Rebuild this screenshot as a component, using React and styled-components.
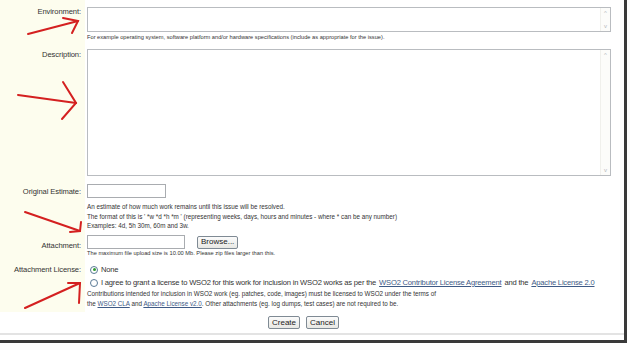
import React from 'react';
import styled, { createGlobalStyle } from 'styled-components';

const Global = createGlobalStyle`
  html, body {
    margin: 0;
    padding: 0;
    background: #ffffff;
  }
  body {
    font-family: "Liberation Sans", Arial, sans-serif;
    color: #222;
  }
`

const Frame = styled.div`
  position: relative;
  width: 624px;
  height: 340px;
  border-right: 3px solid #3a3a3a;
  border-bottom: 3px solid #3a3a3a;
  box-sizing: content-box;
  background: #fff;
  overflow: hidden;
`

const Form = styled.div`
  display: grid;
  grid-template-columns: 85px 1fr;
`

const Label = styled.div`
  background: #fdfdee;
  text-align: right;
  padding: ${p => p.$top || 8}px 4px 0 0;
  font-size: 7.6px;
  letter-spacing: -0.1px;
  color: #333;
  height: ${p => p.$h}px;
  box-sizing: border-box;
`

const Field = styled.div`
  padding: ${p => p.$top || 0}px 0 0 2px;
  height: ${p => p.$h}px;
  box-sizing: border-box;
`

const TextArea = styled.div`
  display: flex;
  width: 524px;
  height: ${p => p.$h}px;
  border: 1px solid #b9bcc0;
  box-sizing: border-box;
  background: #fff;
`

const AreaBody = styled.div`
  flex: 1;
`

const Scroll = styled.div`
  width: 9px;
  display: flex;
  flex-direction: column;
  justify-content: space-between;
  align-items: center;
  padding: 1px 0;
  background: #fcfcfa;
  border-left: 1px solid #f0f0ec;
  font-size: 6px;
  line-height: 8px;
  color: #b4b8bc;
`

const Help = styled.div`
  font-size: ${p => (p.$small ? 5.7 : 6.3)}px;
  line-height: ${p => p.$lh || 10}px;
  color: #333;
  margin-top: ${p => p.$mt || 0}px;
  white-space: nowrap;
`

const Input = styled.div`
  display: inline-block;
  width: ${p => p.$w}px;
  height: 14px;
  border: 1px solid #a9acb0;
  box-sizing: border-box;
  background: #fff;
  vertical-align: top;
`

const InputRow = styled.div`
  display: flex;
  align-items: center;
  gap: 12px;
`

const Button = styled.button`
  font-family: "Liberation Sans", Arial, sans-serif;
  font-size: 8px;
  color: #222;
  height: 13px;
  padding: 0 3px;
  border: 1px solid #7f8a94;
  border-radius: 2px;
  background: linear-gradient(#fbfbfb, #e8e8e4);
  line-height: 10px;
`

const RadioRow = styled.div`
  display: flex;
  align-items: center;
  gap: 3px;
  font-size: 7.6px;
  letter-spacing: -0.2px;
  color: #333;
  height: ${p => p.$h || 14}px;
  padding-left: 3px;
  white-space: nowrap;
`

const Radio = styled.span`
  width: 8px;
  height: 8px;
  border-radius: 50%;
  border: 1px solid #5a7a96;
  background: #fff;
  box-sizing: border-box;
  display: inline-flex;
  align-items: center;
  justify-content: center;
  &::after {
    content: '';
    width: 3px;
    height: 3px;
    border-radius: 50%;
    background: ${p => (p.$on ? '#2f9a2f' : 'transparent')};
  }
`

const Link = styled.a`
  color: #3e5a86;
  text-decoration: underline;
`

const ButtonBar = styled.div`
  grid-column: 1 / 3;
  display: flex;
  gap: 6px;
  padding: 4px 0 0 268px;
  height: 21px;
  box-sizing: border-box;
`

const Separator = styled.div`
  height: 2px;
  background: #e3e3e3;
`

const Arrows = styled.svg`
  position: absolute;
  left: 0;
  top: 0;
  pointer-events: none;
`

const ScrollBox = () => (
  <Scroll>
    <span>&#94;</span>
    <span>v</span>
  </Scroll>
)

export default function App() {
  return (
    <>
      <Global />
      <Frame>
        <Form>
          <Label $h={45} $top={7}>Environment:</Label>
          <Field $h={45} $top={7}>
            <TextArea $h={25}>
              <AreaBody />
              <ScrollBox />
            </TextArea>
            <Help $small $lh={9} $mt={1}>
              For example operating system, software platform and/or hardware specifications (include as appropriate for the issue).
            </Help>
          </Field>

          <Label $h={137} $top={5}>Description:</Label>
          <Field $h={137} $top={4}>
            <TextArea $h={127}>
              <AreaBody />
              <ScrollBox />
            </TextArea>
          </Field>

          <Label $h={50} $top={5}>Original Estimate:</Label>
          <Field $h={50} $top={2}>
            <Input $w={79} />
            <Help $lh={9.5} $mt={0}>
              An estimate of how much work remains until this issue will be resolved.<br />
              The format of this is ' *w *d *h *m ' (representing weeks, days, hours and minutes - where * can be any number)<br />
              Examples: 4d, 5h 30m, 60m and 3w.
            </Help>
          </Field>

          <Label $h={28} $top={9}>Attachment:</Label>
          <Field $h={28} $top={3}>
            <InputRow>
              <Input $w={98} />
              <Button>Browse...</Button>
            </InputRow>
            <Help $small $lh={9} $mt={0}>
              The maximum file upload size is 10.00 Mb. Please zip files larger than this.
            </Help>
          </Field>

          <Label $h={52} $top={5}>Attachment License:</Label>
          <Field $h={52} $top={3}>
            <RadioRow $h={13}>
              <Radio $on />
              None
            </RadioRow>
            <RadioRow $h={13}>
              <Radio />
              I agree to grant a license to WSO2 for this work for inclusion in WSO2 works as per the{' '}
              <Link>WSO2 Contributor License Agreement</Link> and the <Link>Apache License 2.0</Link>
            </RadioRow>
            <Help $lh={10}>
              Contributions intended for inclusion in WSO2 work (eg. patches, code, images) must be licensed to WSO2 under the terms of<br />
              the <Link>WSO2 CLA</Link> and <Link>Apache License v2.0</Link>. Other attachments (eg. log dumps, test cases) are not required to be.
            </Help>
          </Field>

          <ButtonBar>
            <Button>Create</Button>
            <Button>Cancel</Button>
          </ButtonBar>
        </Form>
        <Separator />

        <Arrows width="100" height="340" viewBox="0 0 100 340">
          <g stroke="#d42020" strokeWidth="2" fill="none" strokeLinecap="round">
            <path d="M28 34 L78 21" />
            <path d="M63 18 L78 21 L72 33" />
            <path d="M18 95 L76 103" />
            <path d="M63 82 L76 103 L62 119" />
            <path d="M25 212 L80 231" />
            <path d="M81 222 L80 231 L70 232" />
            <path d="M25 308 L80 283" />
            <path d="M68 283 L80 283 L79 303" />
          </g>
        </Arrows>
      </Frame>
    </>
  );
}
